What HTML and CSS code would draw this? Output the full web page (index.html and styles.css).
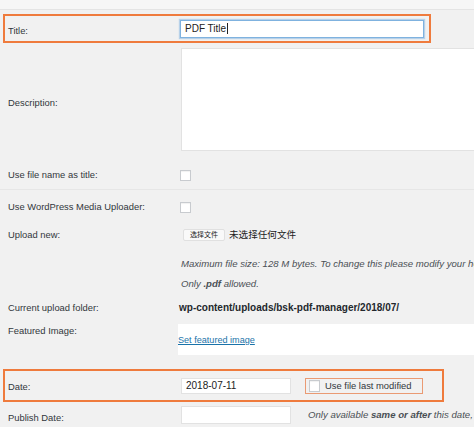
FILE: index.html
```html
<!DOCTYPE html>
<html>
<head>
<meta charset="utf-8">
<link rel="stylesheet" href="styles.css">
</head>
<body>
<div class="band"></div>
<div class="form">
  <div class="row hl hl-title">
    <div class="label">Title:</div>
    <div class="field">
      <div class="text-input focus">PDF Title<span class="caret"></span></div>
    </div>
  </div>

  <div class="row row-desc">
    <div class="label">Description:</div>
    <div class="field"><div class="textarea"></div></div>
  </div>

  <div class="row row-cb1">
    <div class="label">Use file name as title:</div>
    <div class="field"><span class="checkbox"></span></div>
  </div>

  <div class="sep"></div>

  <div class="row row-cb2">
    <div class="label">Use WordPress Media Uploader:</div>
    <div class="field"><span class="checkbox"></span></div>
  </div>

  <div class="row row-upload">
    <div class="label">Upload new:</div>
    <div class="field upload">
      <span class="file-btn">选择文件</span>
      <span class="file-none">未选择任何文件</span>
    </div>
  </div>

  <div class="row row-note1">
    <div class="label"></div>
    <div class="field note">Maximum file size: 128 M bytes. To change this please modify your hosting configuration.</div>
  </div>

  <div class="row row-note2">
    <div class="label"></div>
    <div class="field note">Only <b>.pdf</b> allowed.</div>
  </div>

  <div class="row row-folder">
    <div class="label">Current upload folder:</div>
    <div class="field folder">wp-content/uploads/bsk-pdf-manager/2018/07/</div>
  </div>

  <div class="row row-featured">
    <div class="label">Featured Image:</div>
    <div class="field"><div class="featured-box"><a href="#" class="link">Set featured image</a></div></div>
  </div>

  <div class="row hl hl-date">
    <div class="label">Date:</div>
    <div class="field date-field">
      <div class="text-input date">2018-07-11</div>
      <div class="modified-box"><span class="checkbox small"></span><span class="mod-text">Use file last modified</span></div>
    </div>
  </div>

  <div class="row row-publish">
    <div class="label">Publish Date:</div>
    <div class="field date-field">
      <div class="text-input date publish"></div>
      <div class="note publish-note">Only available <b>same or after</b> this date, leave blank to publish now.</div>
    </div>
  </div>
</div>
</body>
</html>
```

FILE: styles.css
```css
html, body {
  margin: 0;
  padding: 0;
  background: #f1f1f1;
  overflow: hidden;
}
body {
  width: 474px;
  height: 427px;
  font-family: "Liberation Sans", Arial, "Noto Sans CJK SC", sans-serif;
  font-size: 9.4px;
  line-height: 12px;
  color: #32373c;
}
.band {
  height: 9px;
  background: #f6f6f6;
  border-bottom: 1px solid #e4e4e4;
}
.form {
  display: flex;
  flex-direction: column;
}
.row {
  display: flex;
  align-items: center;
  padding-left: 8px;
}
.label {
  width: 172px;
  flex: none;
  white-space: nowrap;
}
.field {
  flex: 1;
  min-width: 0;
  white-space: nowrap;
}
.hl {
  border: 2px solid #ef7b3d;
  padding-left: 3px;
  margin-left: 3px;
}
.hl-title {
  margin-top: 4px;
  width: 421px;
  height: 25px;
}
.hl-title .label { width: 172px; padding-top: 4px; }
.text-input {
  background: #fff;
  border: 1px solid #dcdcdc;
  box-sizing: border-box;
  font-size: 10px;
  color: #222;
  padding-left: 4px;
  display: flex;
  align-items: center;
  flex: none;
}
.text-input.focus {
  width: 244px;
  height: 18px;
  border-color: #7fb2df;
  box-shadow: 0 0 1px 1px rgba(126, 178, 226, 0.5);
}
.caret {
  display: inline-block;
  width: 1px;
  height: 11px;
  background: #222;
  margin-left: 1px;
}
.row-desc { margin-top: 5px; }
.textarea {
  margin-left: 1px;
  width: 320px;
  height: 103px;
  background: #fff;
  border: 1px solid #e2e2e2;
  border-right: none;
  box-sizing: border-box;
}
.row-desc .label { padding-top: 6px; }
.checkbox {
  display: block;
  width: 11px;
  height: 11px;
  box-sizing: border-box;
  background: #fff;
  border: 1px solid #c8cbcf;
  box-shadow: inset 0 1px 1px rgba(0, 0, 0, 0.06);
}
.row-cb1 { padding-top: 18px; padding-bottom: 8px; }
.sep {
  height: 1px;
  background: #e6e6e6;
}
.row-cb2 { padding-top: 11px; }
.row-upload { padding-top: 16px; }
.upload {
  display: flex;
  align-items: center;
}
.file-btn {
  margin-left: 3px;
  height: 12px;
  box-sizing: border-box;
  padding: 0 6px;
  background: #f9f9f9;
  border: 1px solid #e0e0e0;
  border-radius: 2px;
  font-size: 7px;
  line-height: 10px;
  color: #222;
  display: flex;
  align-items: center;
}
.file-none {
  margin-left: 4px;
  font-size: 9.6px;
  color: #222;
}
.note {
  font-style: italic;
  font-size: 9.6px;
  color: #4a4f54;
}
.note b { font-weight: bold; }
.row-note1 { padding-top: 17px; }
.row-note1 .note { padding-left: 1px; }
.row-note2 { padding-top: 8px; }
.row-note2 .note { padding-left: 1px; }
.row-folder { padding-top: 12px; }
.folder {
  font-weight: bold;
  font-size: 10px;
  color: #23282d;
  margin-left: -1px;
}
.row-featured {
  padding-top: 10px;
  align-items: flex-start;
}
.row-featured .label { padding-top: 1px; }
.featured-box {
  margin-left: -2px;
  height: 31px;
  background: #fff;
  box-sizing: border-box;
  padding-top: 10px;
}
.link {
  font-size: 9.1px;
  color: #1a73a9;
  text-decoration: underline;
}
.hl-date {
  margin-top: 14px;
  width: 434px;
  height: 29px;
}
.hl-date .label { width: 173px; padding-top: 2px; }
.date-field {
  display: flex;
  align-items: center;
}
.text-input.date {
  width: 110px;
  height: 16px;
  border-color: #e2e2e2;
}
.modified-box {
  margin-left: 14px;
  width: 118px;
  height: 16px;
  box-sizing: border-box;
  border: 1px solid #ea9a73;
  display: flex;
  align-items: center;
  padding-left: 3px;
  flex: none;
}
.checkbox.small {
  width: 11px;
  height: 12px;
}
.mod-text {
  margin-left: 5px;
  color: #32373c;
}
.row-publish {
  padding-top: 4px;
}
.row-publish .label { width: 173px; padding-top: 5px; }
.text-input.publish {
  height: 18px;
}
.publish-note {
  margin-left: 17px;
}
```
